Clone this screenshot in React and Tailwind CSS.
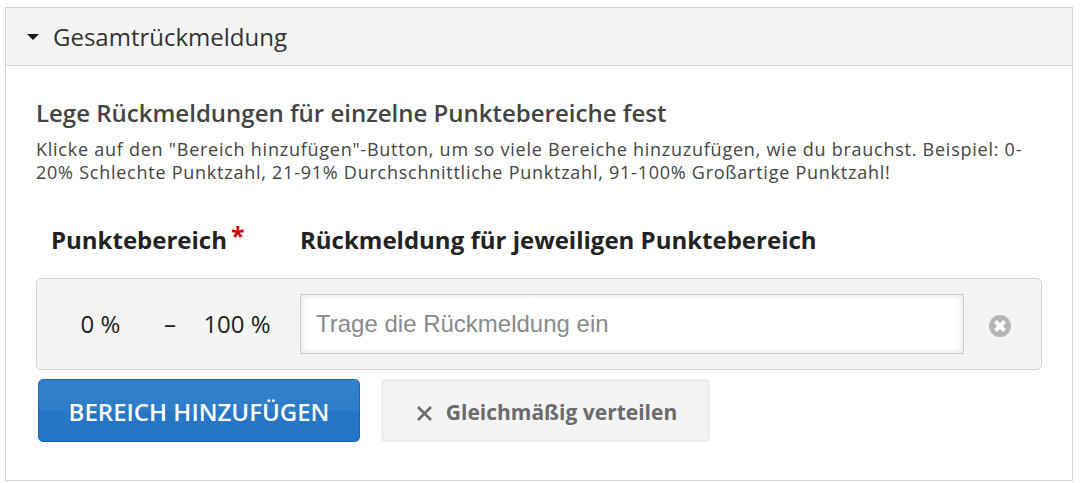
import React from "react";

function App() {
    return (
        <div className="w-[1082px] h-[483px] bg-white pt-[7px] pl-[5px] font-['Open_Sans',sans-serif] overflow-hidden">
            <div className="w-[1068px] h-[474px] border border-[#d4d4d4]">
                {/* Header */}
                <div className="h-[58px] bg-[#f4f4f4] border-b border-[#d4d4d4] flex items-center pl-[21px]">
                    <span className="w-0 h-0 border-x-[6px] border-x-transparent border-t-[6px] border-t-[#1a1a1a]"></span>
                    <span className="ml-[14px] text-[24px] text-[#333]">Gesamtrückmeldung</span>
                </div>

                <div className="pl-[30px] pr-[30px] pt-[31px]">
                    <h2 className="text-[24px] leading-[32px] font-semibold text-[#444]">Lege Rückmeldungen für einzelne Punktebereiche fest</h2>
                    <p className="mt-[9px] text-[18px] tracking-[0.75px] leading-[23px] text-[#444]">
                        Klicke auf den "Bereich hinzufügen"-Button, um so viele Bereiche hinzuzufügen, wie du brauchst. Beispiel: 0-20% Schlechte Punktzahl, 21-91% Durchschnittliche Punktzahl, 91-100% Großartige Punktzahl!
                    </p>

                    <div className="flex mt-[40px] text-[24px] leading-[32px] font-bold text-[#222]">
                        <div className="w-[264px] pl-[15px] relative">
                            Punktebereich<span className="absolute left-[195px] -top-[5px] text-[25px] text-[#d40000]">*</span>
                        </div>
                        <div>Rückmeldung für jeweiligen Punktebereich</div>
                    </div>

                    <div className="mt-[22px] h-[92px] w-[1006px] bg-[#f4f4f4] border border-[#d4d4d4] rounded-[5px] flex items-center">
                        <span className="w-[127px] text-center text-[24px] text-[#222]">0 %</span>
                        <span className="w-[12px] text-center text-[24px] text-[#222]">–</span>
                        <span className="w-[122px] text-center text-[24px] text-[#222]">100 %</span>
                        <div className="ml-[2px] h-[60px] w-[664px] bg-white border border-[#ccc] shadow-[inset_0_0_6px_rgba(0,0,0,0.12)] flex items-center pl-[15px] font-['Liberation_Sans',sans-serif] text-[24px] text-[#8a8a8a]">
                            Trage die Rückmeldung ein
                        </div>
                        <svg className="ml-[25px] mt-[3px]" width="22" height="22" viewBox="0 0 22 22">
                            <circle cx="11" cy="11" r="11" fill="#b5b5b5" />
                            <path d="M6.5 6.5l9 9M15.5 6.5l-9 9" stroke="#fff" strokeWidth="4" />
                        </svg>
                    </div>

                    <div className="flex mt-[9px] ml-[2px]">
                        <button className="w-[322px] h-[63px] pt-[3px] rounded-[5px] border border-[#1f66ad] bg-[linear-gradient(#3381cb,#2f7dc9_50%,#2776c5_50%,#2475c5)] text-white text-[24px] font-semibold">
                            BEREICH HINZUFÜGEN
                        </button>
                        <button className="ml-[21px] w-[329px] h-[63px] pt-[5px] pl-[2px] rounded-[4px] border-[3px] border-[#eeeeee] bg-[#f4f4f4] flex items-center justify-center text-[21px] font-bold text-[#6b6b6b]">
                            <svg className="mr-[13px] mt-[1px]" width="17" height="17" viewBox="0 0 17 17">
                                <path d="M2 2l13 13M15 2L2 15" stroke="#6b6b6b" strokeWidth="2.6" />
                            </svg>
                            Gleichmäßig verteilen
                        </button>
                    </div>
                </div>
            </div>
        </div>
    );
}

export default App;
